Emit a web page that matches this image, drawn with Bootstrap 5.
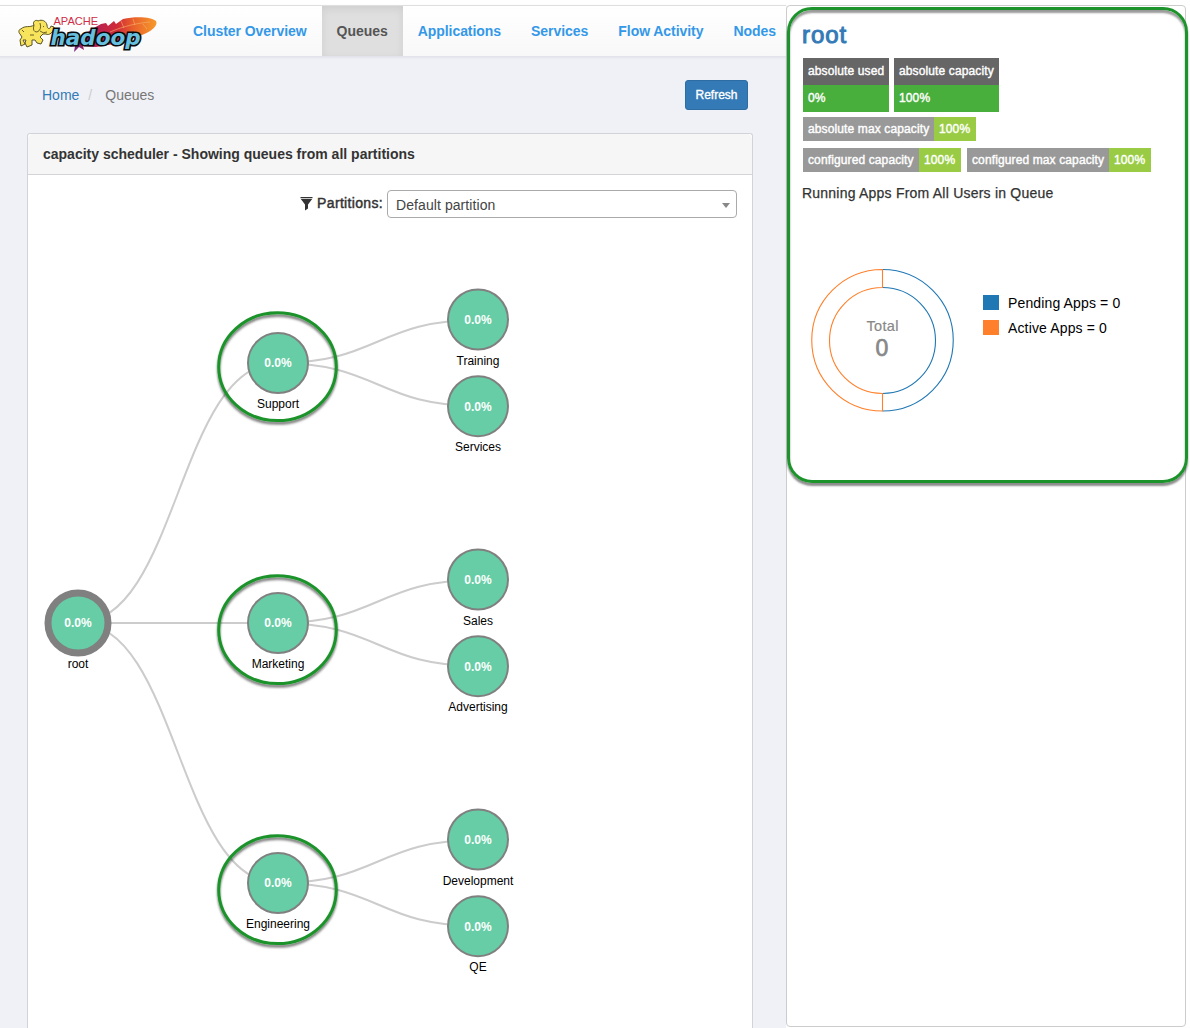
<!DOCTYPE html>
<html lang="en">
<head>
<meta charset="utf-8">
<meta name="viewport" content="width=device-width, initial-scale=1">
<title>Queues</title>
<link href="https://cdn.jsdelivr.net/npm/bootstrap@5.3.0/dist/css/bootstrap.min.css" rel="stylesheet">
<style>
body{font-family:"Liberation Sans",Arial,sans-serif;font-size:14px;line-height:20px;color:#333;background:#fff;overflow:hidden}
.yarn-app{width:1186px;height:1028px;padding-top:5px}
.main-col{width:786px;background:#f0f1f6;border-top:1px solid #ddd}
.top-nav{height:50px;padding:0;background:linear-gradient(#fff,#f8f8f8);box-shadow:0 1px 2px 1px #e3e3ea}
.logo-link{width:178px;height:50px}
.wordmark{font-family:"DejaVu Sans",sans-serif}
.top-nav .navbar-nav .nav-link{padding:15px;font-weight:700;color:#3498e8;line-height:20px;letter-spacing:-.05px;white-space:nowrap}
.top-nav .navbar-nav .nav-link.active{color:#555;background:#dfdfdf;box-shadow:inset 0 3px 9px rgba(0,0,0,.075)}
.crumb-bar{height:77px;padding:0 38px 0 42px}
.crumb-bar a{color:#337ab7;text-decoration:none}
.crumb-bar .breadcrumb-item+.breadcrumb-item{padding-left:9px;color:#777}
.crumb-bar .breadcrumb-item+.breadcrumb-item::before{color:#ccc;padding-right:13px}
.btn-refresh{width:63px;height:30px;padding:0;font-size:12px;line-height:18px;color:#fff;background:#337ab7;border:1px solid #2e6da4;border-radius:3px;-webkit-text-stroke:.35px #fff}
.btn-refresh:hover{color:#fff;background:#286090}
.queue-card{width:726px;margin-left:27px;border:1px solid #d2d3d8;border-bottom:0;border-radius:3px 3px 0 0}
.queue-card .card-header{height:41px;padding:10px 15px;background:#f6f6f6;border-color:#d4d4d8;font-weight:700;line-height:20px}
.filter-row{height:55px;padding:15px 15px 0 0}
.part-label{-webkit-text-stroke:.45px #333;letter-spacing:.33px;padding-top:3px}
.part-select{width:350px;height:28px;border:1px solid #aaa;border-radius:4px;padding:2px 6px 0 8px;color:#444;margin-left:4px;letter-spacing:.08px}
.tree text{font-size:12px;text-anchor:middle;fill:#000}
.tree .pct{fill:#fff;font-weight:700}
.side-panel{width:400px;height:1022px;border:1px solid #ccc;border-radius:4px;padding:15px}
.side-title{font-size:24px;line-height:28px;color:#337ab7;margin-bottom:9px;letter-spacing:.9px;-webkit-text-stroke:1px #337ab7}
.stat-area{padding-left:1px}
.stat-tiles{gap:5px;margin-bottom:5px}
.stat-pair{gap:6px;margin-top:7px}
.stat-key,.stat-val{font-size:12px;color:#fff;padding:0 5px;letter-spacing:.12px;-webkit-text-stroke:.4px #fff;white-space:nowrap}
.stat-box .stat-key{background:#666;height:27px;line-height:26px}
.stat-box .stat-val{background:#48ae3c;height:27px;line-height:27px}
.stat-line{height:24px;line-height:24px}
.stat-line .stat-key{background:#999}
.stat-line .stat-val{background:#9c4;width:42px}
.callout-frame{top:1px;left:0;width:401px;height:476px;border:3px solid #1c932b;border-radius:25px;box-shadow:0 3px 2px rgba(0,0,0,.45),inset 0 3px 2px rgba(0,0,0,.4);pointer-events:none}
.w86{width:86px}.w105{width:105px}.w131{width:131px}.w116{width:116px}.w142{width:142px}
.apps-title{margin-top:11px;letter-spacing:.22px;-webkit-text-stroke:.25px #333}
.apps-chart{padding:65px 0 0 9px}
.legend-list{padding:22px 0 0 28px}
.donut text{text-anchor:middle;fill:#888}
.legend-row{color:#000;gap:9px;height:25px;letter-spacing:.14px}
.legend-chip{width:16px;height:15px}
.chip-pending{background:#1f77b4}
.chip-active{background:#ff7f2a}
</style>
<script src="https://cdn.jsdelivr.net/npm/bootstrap@5.3.0/dist/js/bootstrap.bundle.min.js"></script>
</head>
<body>
<div class="yarn-app d-flex">
  <div class="main-col d-flex flex-column">
    <nav class="top-nav navbar navbar-expand flex-nowrap justify-content-start flex-shrink-0">
      <a class="logo-link" href="#" aria-label="Apache Hadoop">
        <svg class="d-block" width="178" height="50" viewBox="0 6 178 50">
          <defs><linearGradient id="feather"><stop offset="0" stop-color="#672a86"/><stop offset=".25" stop-color="#b21e55"/><stop offset=".55" stop-color="#d02b38"/><stop offset=".72" stop-color="#e85e2b"/><stop offset="1" stop-color="#f79a2b"/></linearGradient></defs>
          <path d="M72 43C84 35 91 29 101 24L106 23 108 26 114 21 116 24 123 19C136 16 152 17 156 21 159 27 147 34 136 37L126 42 96 47 83 46 84 50 79 47 74 52 75 46 70 47Z" fill="url(#feather)"/>
          <path d="M110 32C124 26 138 23 150 22M124 28L121 21M135 25L133 19M143 24l4 5" fill="none" stroke="#f6b16a" stroke-width=".6"/>
          <path d="M20 34C18 32 19 29 21 29 25 25 30 28 34 25 32 22 36 19 38 21 42 19 46 21 47 25 47 29 50 30 51 26L54 27C54 32 49 36 46 34L43 34 40 37 43 40 41 44 37 43 35 40 32 40 32 45 27 47 25 43 26 40 23 40 25 44 21 46 20 40 22 37Z" fill="#f8e45c" stroke="#5b5222" stroke-width="1" stroke-linejoin="round"/>
          <path d="M34 25Q32 32 37 32Q42 30 40 23M43 26l1 1M40 31Q43 34 47 32M30 35L34 35M22 30l2 2" fill="none" stroke="#5b5222" stroke-width=".9"/>
          <text x="53.500" y="24.500" font-size="10.500" textLength="44.500" lengthAdjust="spacingAndGlyphs" fill="#cf2c45">APACHE</text>
          <text class="wordmark" x="50.500" y="44.800" font-size="20.500" font-weight="700" font-style="italic" textLength="90" lengthAdjust="spacingAndGlyphs" fill="#66bfdf" stroke="#0a0a0a" stroke-width="3.200" paint-order="stroke" stroke-linejoin="miter">hadoop</text>
        </svg>
      </a>
      <div class="navbar-nav">
        <a class="nav-link" href="#">Cluster Overview</a>
        <a class="nav-link active" href="#">Queues</a>
        <a class="nav-link" href="#">Applications</a>
        <a class="nav-link" href="#">Services</a>
        <a class="nav-link" href="#">Flow Activity</a>
        <a class="nav-link" href="#">Nodes</a>
      </div>
    </nav>
    <div class="crumb-bar d-flex align-items-center justify-content-between flex-shrink-0">
      <ol class="breadcrumb mb-0">
        <li class="breadcrumb-item"><a href="#">Home</a></li>
        <li class="breadcrumb-item active">Queues</li>
      </ol>
      <button class="btn btn-refresh">Refresh</button>
    </div>
    <div class="card queue-card flex-grow-1">
      <div class="card-header">capacity scheduler - Showing queues from all partitions</div>
      <div class="filter-row d-flex justify-content-end">
        <div class="part-label"><svg class="me-1" width="13" height="14" viewBox="0 0 13 14"><path d="M.5 0h12v1.200H.5zM.8 2h11.400L8 7.500v4L5 13.500v-6z" fill="#333"/></svg>Partitions:</div>
        <div class="part-select d-flex align-items-center justify-content-between"><span>Default partition</span><svg width="8" height="5"><path d="M0 0h8L4 5z" fill="#888"/></svg></div>
      </div>
      <svg class="tree" width="724" height="798" viewBox="28 230 724 798">
        <defs>
          <filter id="ringShade" x="-10%" y="-10%" width="120%" height="125%"><feDropShadow dx="0" dy="2.500" stdDeviation=".8" flood-color="#000" flood-opacity=".55"/></filter>
        </defs>
        <g fill="none" stroke="#ccc" stroke-width="2">
          <path d="M78 623C178 623 178 363 278 363"/><path d="M78 623H278"/><path d="M78 623C178 623 178 883 278 883"/>
          <path d="M278 363C378 363 378 320 478 320"/><path d="M278 363C378 363 378 406 478 406"/>
          <path d="M278 623C378 623 378 580 478 580"/><path d="M278 623C378 623 378 666 478 666"/>
          <path d="M278 883C378 883 378 840 478 840"/><path d="M278 883C378 883 378 926 478 926"/>
        </g>
        <g fill="#66cda6" stroke="#808080" stroke-width="2">
          <circle cx="78" cy="623" r="30" stroke-width="7"/>
          <circle cx="278" cy="363" r="30"/><circle cx="278" cy="623" r="30"/><circle cx="278" cy="883" r="30"/>
          <circle cx="478" cy="319.500" r="30"/><circle cx="478" cy="406.200" r="30"/>
          <circle cx="478" cy="579.500" r="30"/><circle cx="478" cy="666.200" r="30"/>
          <circle cx="478" cy="839.500" r="30"/><circle cx="478" cy="926.200" r="30"/>
        </g>
        <g>
          <text class="pct" x="78" y="627">0.0%</text><text class="pct" x="278" y="367">0.0%</text><text class="pct" x="278" y="627">0.0%</text><text class="pct" x="278" y="887">0.0%</text>
          <text class="pct" x="478" y="324">0.0%</text><text class="pct" x="478" y="411">0.0%</text><text class="pct" x="478" y="584">0.0%</text><text class="pct" x="478" y="671">0.0%</text><text class="pct" x="478" y="844">0.0%</text><text class="pct" x="478" y="931">0.0%</text>
        </g>
        <g>
          <text x="78" y="668">root</text><text x="278" y="408">Support</text><text x="278" y="668">Marketing</text><text x="278" y="928">Engineering</text>
          <text x="478" y="365">Training</text><text x="478" y="451">Services</text><text x="478" y="625">Sales</text><text x="478" y="711">Advertising</text><text x="478" y="885">Development</text><text x="478" y="971">QE</text>
        </g>
        <g fill="none" stroke="#1c932b" stroke-width="3" filter="url(#ringShade)">
          <ellipse cx="277.500" cy="366.700" rx="58.800" ry="53.900"/>
          <ellipse cx="277.500" cy="629.700" rx="58.800" ry="53.900"/>
          <ellipse cx="277.500" cy="889.700" rx="58.800" ry="53.900"/>
        </g>
      </svg>
    </div>
  </div>
  <aside class="side-panel position-relative bg-white flex-shrink-0">
    <h2 class="side-title">root</h2>
    <div class="stat-area">
      <div class="stat-tiles d-flex">
        <div class="stat-box w86"><div class="stat-key">absolute used</div><div class="stat-val">0%</div></div>
        <div class="stat-box w105"><div class="stat-key">absolute capacity</div><div class="stat-val">100%</div></div>
      </div>
      <div class="stat-line d-flex"><span class="stat-key w131">absolute max capacity</span><span class="stat-val">100%</span></div>
      <div class="stat-pair d-flex">
        <div class="stat-line d-flex"><span class="stat-key w116">configured capacity</span><span class="stat-val">100%</span></div>
        <div class="stat-line d-flex"><span class="stat-key w142">configured max capacity</span><span class="stat-val">100%</span></div>
      </div>
    </div>
    <div class="apps-title">Running Apps From All Users in Queue</div>
    <div class="apps-chart d-flex">
      <svg class="donut" width="144" height="144" viewBox="811 268 144 144">
        <g fill="none" stroke-width="1.100">
          <path d="M882.500 269.500A70.500 70.500 0 0 1 882.500 411M882.500 287.500A53 53 0 0 1 882.500 393.500" stroke="#1f77b4"/>
          <path d="M882.500 411A70.500 70.500 0 0 1 882.500 269.500V287.500A53 53 0 0 0 882.500 393.500Z" stroke="#ff7f2a"/>
        </g>
        <text x="882.500" y="331" font-size="14.500" textLength="32" stroke="#888" stroke-width=".2">Total</text>
        <text x="882" y="356" font-size="23" stroke="#888" stroke-width=".7">0</text>
      </svg>
      <div class="legend-list">
        <div class="legend-row d-flex align-items-center"><span class="legend-chip chip-pending"></span>Pending Apps = 0</div>
        <div class="legend-row d-flex align-items-center"><span class="legend-chip chip-active"></span>Active Apps = 0</div>
      </div>
    </div>
    <div class="callout-frame position-absolute"></div>
  </aside>
</div>
</body>
</html>
